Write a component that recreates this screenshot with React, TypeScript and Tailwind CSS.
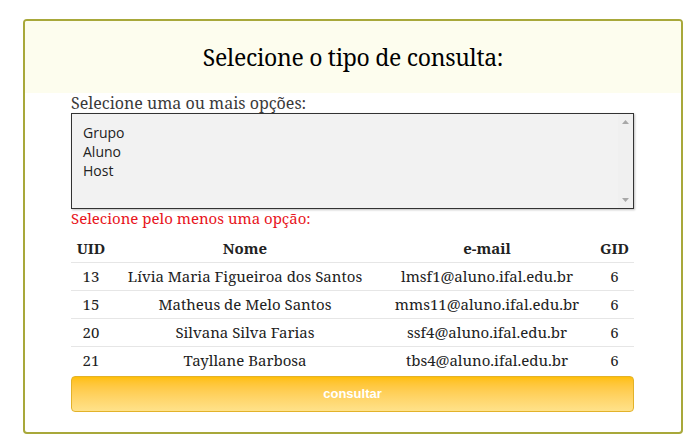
import React from 'react';

const rows = [
  { uid: 13, nome: 'Lívia Maria Figueiroa dos Santos', email: 'lmsf1@aluno.ifal.edu.br', gid: 6 },
  { uid: 15, nome: 'Matheus de Melo Santos', email: 'mms11@aluno.ifal.edu.br', gid: 6 },
  { uid: 20, nome: 'Silvana Silva Farias', email: 'ssf4@aluno.ifal.edu.br', gid: 6 },
  { uid: 21, nome: 'Tayllane Barbosa', email: 'tbs4@aluno.ifal.edu.br', gid: 6 },
];

export default function App() {
  return (
    <div className="w-[700px] h-[443px] bg-white pt-[19px] pl-[23px] font-['Noto_Serif','DejaVu_Serif',serif]">
      <div className="w-[660px] h-[415px] border-2 border-[#a8a83a] rounded-[4px] overflow-hidden">
        {/* header */}
        <div className="h-[72px] bg-[#fdfdee] flex items-center justify-center">
          <h1 className="text-[23px] text-black tracking-[-0.3px]">Selecione o tipo de consulta:</h1>
        </div>

        <div className="pl-[46px] pr-[47px]">
          <label className="block text-[16px] leading-[20px] text-[#3a3a3a]">Selecione uma ou mais opções:</label>
          <div className="relative h-[96px] bg-[#f2f2f2] border border-[#333] shadow-[1px_1px_2px_rgba(0,0,0,0.25)]">
            <div className="pl-[11px] pt-[9px] text-[14px] leading-[19px] text-[#222] font-['Open_Sans',sans-serif]">
              <div>Grupo</div>
              <div>Aluno</div>
              <div>Host</div>
            </div>
            {/* scrollbar */}
            <div className="absolute right-0 top-0 bottom-0 w-[15px] bg-[#f0f0f0] flex flex-col items-center justify-between py-[6px]">
              <svg width="7" height="4" viewBox="0 0 7 4"><path d="M0 4 L3.5 0 L7 4 Z" fill="#a8a8a8" /></svg>
              <svg width="7" height="4" viewBox="0 0 7 4"><path d="M0 0 L3.5 4 L7 0 Z" fill="#a8a8a8" /></svg>
            </div>
          </div>
          <p className="text-[15px] leading-[19px] text-[#e8141c]">Selecione pelo menos uma opção:</p>

          <table className="mt-[6px] w-full table-fixed text-[15px] text-[#222] border-collapse">
            <colgroup>
              <col className="w-[40px]" />
              <col className="w-[268px]" />
              <col className="w-[216px]" />
              <col />
            </colgroup>
            <thead>
              <tr className="h-[28px] border-b border-[#e6e6e6]">
                <th className="text-center font-bold">UID</th>
                <th className="text-center font-bold">Nome</th>
                <th className="text-center font-bold">e-mail</th>
                <th className="text-center font-bold">GID</th>
              </tr>
            </thead>
            <tbody>
              {rows.map((r, i) => (
                <tr key={r.uid} className={i < rows.length - 1 ? 'h-[28px] border-b border-[#e6e6e6]' : 'h-[28px]'}>
                  <td className="text-center">{r.uid}</td>
                  <td className="text-center whitespace-nowrap">{r.nome}</td>
                  <td className="text-center whitespace-nowrap">{r.email}</td>
                  <td className="text-center">{r.gid}</td>
                </tr>
              ))}
            </tbody>
          </table>

          <button className="mt-[2px] w-full h-[36px] rounded-[4px] border border-[#e2b22a] bg-gradient-to-b from-[#ffbf00] to-[#ffe28a] text-white text-[13px] font-bold font-['Liberation_Sans',sans-serif]">
            consultar
          </button>
        </div>
      </div>
    </div>
  );
}
